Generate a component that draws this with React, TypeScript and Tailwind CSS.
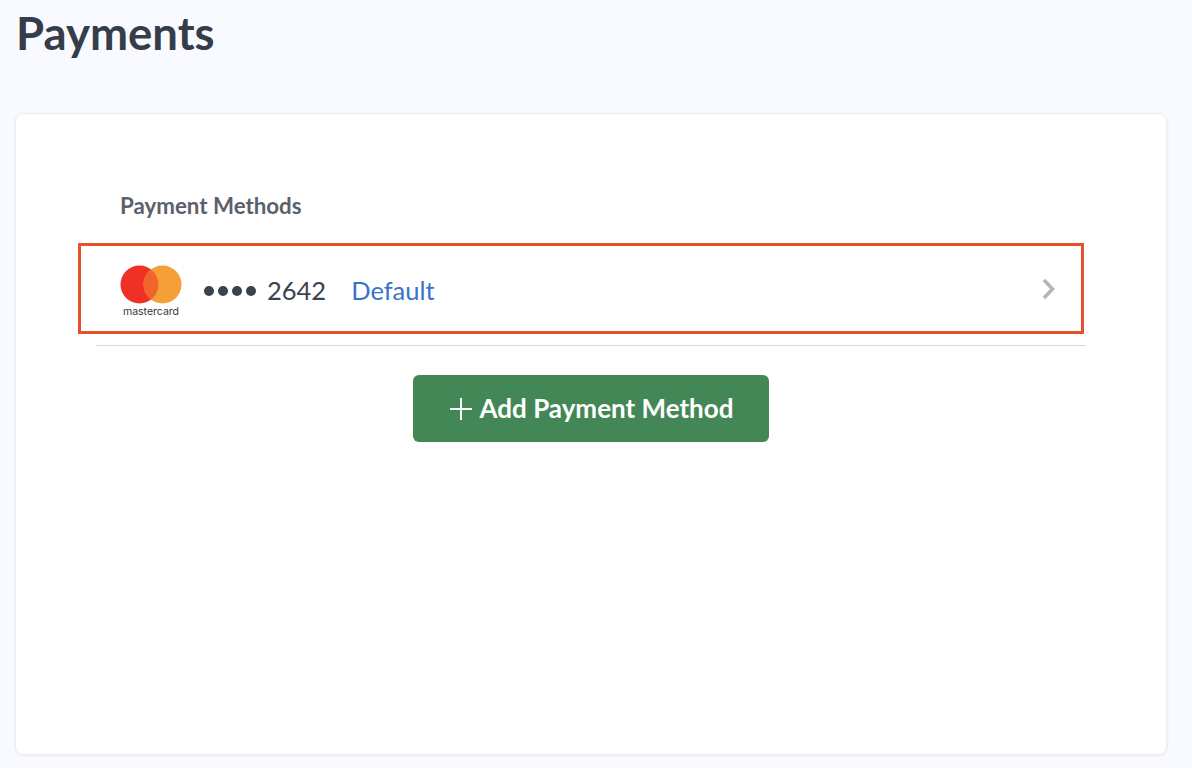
import React from "react";

// Mastercard mark: two overlapping circles
const MastercardLogo: React.FC = () => (
  <div className="flex flex-col items-center w-[62px] mt-[5px]">
    <svg width="62" height="39" viewBox="0 0 62 39">
      <circle cx="19.5" cy="19.5" r="19" fill="#ee3124" />
      <circle cx="42.5" cy="19.5" r="19" fill="#f49f37" />
      <path
        d="M31 4.4a19 19 0 0 1 0 30.2a19 19 0 0 1 0-30.2z"
        fill="#f0642e"
      />
    </svg>
    <span className="font-['Inter',sans-serif] text-[10.5px] leading-[11px] mt-[2px] text-[#33383f] whitespace-nowrap">
      mastercard
    </span>
  </div>
);

const PaymentRow: React.FC = () => (
  <div className="h-[91px] ml-[62px] mr-[82px] border-[3px] border-[#e8502c] flex items-center pl-[39px] pr-[26px]">
    <MastercardLogo />
    <div className="ml-[22px] mt-[3px] flex items-center text-[25.5px] text-[#3b4350]">
      <div className="flex gap-[4px] mr-[11px] mt-[1px]">
        <span className="w-[10px] h-[10px] rounded-full bg-[#3b4350]" />
        <span className="w-[10px] h-[10px] rounded-full bg-[#3b4350]" />
        <span className="w-[10px] h-[10px] rounded-full bg-[#3b4350]" />
        <span className="w-[10px] h-[10px] rounded-full bg-[#3b4350]" />
      </div>
      <span>2642</span>
      <span className="ml-[25px] text-[#3a73c9]">Default</span>
    </div>
    <svg className="ml-auto" width="13" height="22" viewBox="0 0 13 22">
      <polyline
        points="2,2 10.5,11 2,20"
        fill="none"
        stroke="#b5b6bd"
        strokeWidth="3.6"
      />
    </svg>
  </div>
);

export default function App() {
  return (
    <div className="h-[768px] overflow-hidden bg-[#f9faff] pl-[15px] pr-[25px] font-['Lato',sans-serif]">
      <h1 className="h-[113px] pl-[1px] text-[45.5px] leading-[66px] font-bold text-[#363d4a]">
        Payments
      </h1>

      <div className="h-[642px] bg-white rounded-[8px] border border-[#ebecf0] shadow-[0_1px_4px_rgba(40,50,90,0.06)]">
        <h2 className="pt-[77px] pl-[104px] text-[22.3px] leading-[30px] font-bold text-[#5b616b]">
          Payment Methods
        </h2>
        <div className="mt-[22px]">
          <PaymentRow />
        </div>
        <div className="mt-[11px] mx-[80px] h-px bg-[#d6d6d6]" />
        <div className="mt-[29px] flex justify-center">
          <button className="w-[356px] h-[67px] pl-[1px] rounded-[6px] bg-[#438756] text-white text-[26px] font-bold flex items-center justify-center">
            <svg className="mr-[8px]" width="22" height="22" viewBox="0 0 22 22">
              <path d="M11 0v22M0 11h22" stroke="#fff" strokeWidth="2" fill="none" />
            </svg>
            Add Payment Method
          </button>
        </div>
      </div>
    </div>
  );
}
